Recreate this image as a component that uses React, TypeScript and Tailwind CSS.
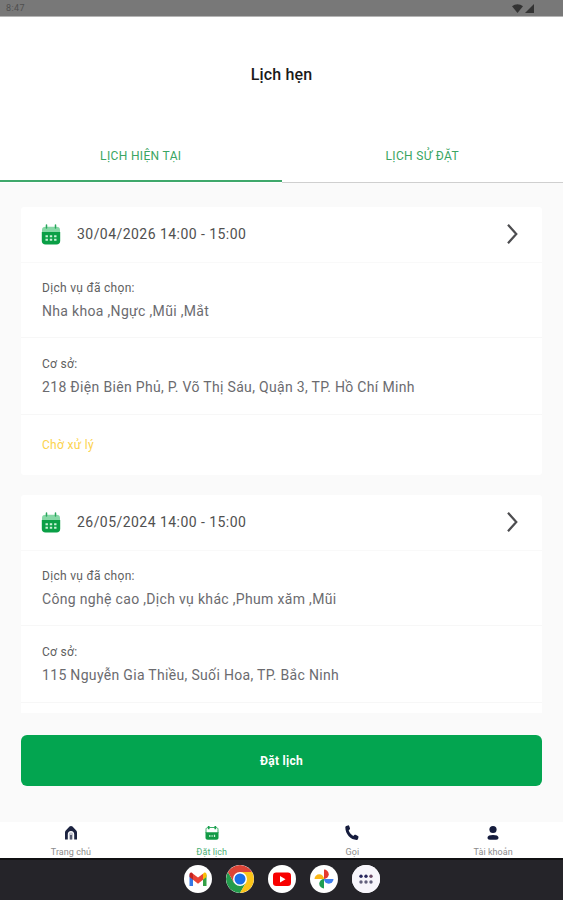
import { ReactNode } from "react";
import clsx from "clsx";

type Appointment = {
  time: string;
  services: string;
  address: string;
  status?: string;
};

const appointments: Appointment[] = [
  {
    time: "30/04/2026 14:00 - 15:00",
    services: "Nha khoa ,Ngực ,Mũi ,Mắt",
    address: "218 Điện Biên Phủ, P. Võ Thị Sáu, Quận 3, TP. Hồ Chí Minh",
    status: "Chờ xử lý",
  },
  {
    time: "26/05/2024 14:00 - 15:00",
    services: "Công nghệ cao ,Dịch vụ khác ,Phum xăm ,Mũi",
    address: "115 Nguyễn Gia Thiều, Suối Hoa, TP. Bắc Ninh",
  },
];

function CalendarIcon() {
  return (
    <svg className="h-[21px] w-5 shrink-0" viewBox="0 0 20 21">
      <path d="M1 9V6c0-2.200 1.300-3.200 3.500-3.200h11C17.700 2.800 19 3.800 19 6v3z" fill="#86d8a6" />
      <path d="M5.500 1v3M14.500 1v3" stroke="#2aa55c" strokeWidth="1.500" strokeLinecap="round" />
      <path d="M.8 8h18.400v9c0 2.300-1.400 3.500-3.700 3.500h-11C2.200 20.500.8 19.300.8 17z" fill="#0a9f46" />
      <path
        d="M4.500 12.200h2.400M8.800 12.200h2.400M13.100 12.200h2.400M4.500 15.800h2.400M8.800 15.800h2.400M13.100 15.800h2.400"
        stroke="#c9f2d8"
        strokeWidth="2"
      />
    </svg>
  );
}

function HomeIcon() {
  return (
    <svg className="size-4" viewBox="0 0 16 16">
      <path
        d="M8 1c.6 0 1.100.2 1.500.600L13 5.200c.7.700 1 1.500 1 2.400v6.900h-2.800V9.200C11.200 7.300 10 6 8 6S4.800 7.300 4.800 9.200v5.300H2V7.600c0-.9.300-1.700 1-2.400l3.500-3.600C6.900 1.200 7.400 1 8 1z"
        fill="#1c2340"
      />
      <path d="M8 7.200c1.300 0 2.100.8 2.100 2.100v5.200H5.900V9.300C5.900 8 6.700 7.200 8 7.200z" fill="#c4c6d0" />
      <path d="M7.100 10h1.800v4.500H7.100z" fill="#4a4f66" />
    </svg>
  );
}

function BookingIcon() {
  return (
    <svg className="size-4" viewBox="0 0 16 16">
      <path d="M2 8V4.500C2 3.200 2.800 2.500 4 2.500h8c1.200 0 2 .7 2 2V8" fill="none" stroke="#3cae68" />
      <path d="M4.700 1v3.200M11.300 1v3.200" stroke="#1ba04f" strokeWidth="1.700" />
      <path d="M1.500 7.300h13v5.200c0 1.500-.8 2.200-2.200 2.200H3.700c-1.400 0-2.200-.7-2.200-2.200z" fill="#129a45" />
      <path d="M5 11h1.500M7.500 11h1.200M10.500 9.700v2.300" stroke="#d8f3e1" strokeWidth="1.300" />
    </svg>
  );
}

function PhoneIcon() {
  return (
    <svg className="size-4" viewBox="0 0 16 16">
      <path
        d="M2.200 1 4 .4c.5-.2 1 .1 1.200.6l.8 2.300c.1.500 0 .9-.4 1.200l-.9.800c.7 2.300 2.200 4.200 4.600 5.600l1-.9c.4-.3.900-.4 1.300-.2l2.300 1.100c.5.200.7.700.6 1.200l-.5 1.800c-.2.600-.7 1-1.300 1C7 15 1.300 9.500 1.300 2.300c0-.6.4-1.100.9-1.300z"
        fill="#151c3d"
      />
    </svg>
  );
}

function UserIcon() {
  return (
    <svg className="size-4" viewBox="0 0 16 16">
      <circle cx="8" cy="4.500" r="3.600" fill="#151c3d" />
      <path d="M2.500 12.500c0-1.700 2.400-2.500 5.500-2.500s5.500.8 5.500 2.500c0 1.500-.8 2.200-2.300 2.200H4.800c-1.500 0-2.300-.7-2.300-2.200z" fill="#151c3d" />
    </svg>
  );
}

function StatusBar() {
  return (
    <div className="flex h-[17px] shrink-0 items-center justify-between border-b border-[#b5b5b5] bg-[#787878] pr-[29px] pl-[6px] text-[9px] tracking-[0.4px] text-[#4f4f4f]">
      <span className="pt-0.5">8:47</span>
      <div className="flex items-center gap-0.5 pt-px">
        <svg className="h-[9px] w-[11px]" viewBox="0 0 11 9">
          <path d="M0 2.200C3.200-.5 7.800-.5 11 2.200L5.500 9z" fill="#333" />
        </svg>
        <svg className="size-[9px]" viewBox="0 0 9 9">
          <path d="M9 0v9H0z" fill="#333" />
        </svg>
      </div>
    </div>
  );
}

function Field({ label, value, className }: { label: string; value: string; className: string }) {
  return (
    <div className={clsx("border-b border-[#f7f7f7] pr-5 pl-[21px] whitespace-nowrap", className)}>
      <p className="text-xs leading-6 tracking-[0.3px] text-[#606060]">{label}</p>
      <p className="-mt-px text-sm leading-6 tracking-[0.32px] text-[#6b6b6f]">{value}</p>
    </div>
  );
}

function AppointmentCard({ item }: { item: Appointment }) {
  return (
    <article className="rounded-[3px] bg-white">
      <div className="flex h-14 items-center border-b border-[#f9f9f9] pr-6 pb-px pl-5">
        <CalendarIcon />
        <span className="ml-4 text-sm tracking-[0.45px] whitespace-nowrap text-[#505050]">
          {item.time}
        </span>
        <svg className="ml-auto h-5 w-3" viewBox="0 0 12 20" fill="none">
          <path d="m2 .8 8.300 9.200L2 19.200" stroke="#4d4d50" strokeWidth="2.200" />
        </svg>
      </div>
      <Field label="Dịch vụ đã chọn:" value={item.services} className="h-[75px] pt-[13px]" />
      <Field label="Cơ sở:" value={item.address} className="h-[77px] pt-[14px]" />
      <p className="h-[60px] pr-5 pl-[21px] text-xs leading-[60px] tracking-[0.3px] text-[#fcd34d]">
        {item.status}
      </p>
    </article>
  );
}

function NavItem({ label, active, children }: { label: string; active?: boolean; children: ReactNode }) {
  return (
    <div className="flex flex-1 flex-col items-center pt-[3px] pl-px">
      {children}
      <span
        className={clsx(
          "mt-1.5 text-[9px] leading-[11px] tracking-[0.05px]",
          active ? "text-[#4caf76]" : "text-[#8c8c8c]",
        )}
      >
        {label}
      </span>
    </div>
  );
}

function DockIcon({ children }: { children: ReactNode }) {
  return (
    <div className="size-7 overflow-hidden rounded-full bg-white">
      <svg className="size-7" viewBox="0 0 28 28">
        {children}
      </svg>
    </div>
  );
}

function Dock() {
  return (
    <div className="flex h-[42px] shrink-0 items-center justify-center gap-[14px] border-t-2 border-[#101012] bg-[#252429] pb-0.5">
      {/* Gmail */}
      <DockIcon>
        <path d="M5.500 9.500v11.500H9V12z" fill="#3578e5" />
        <path d="M22.500 9.500v11.500H19V12z" fill="#34a047" />
        <path d="M19 8.700 20 7.800c1.300-.8 2.500.100 2.500 1.600V12L19 14.800z" fill="#fbbc04" />
        <path d="M5.500 9.400c0-1.500 1.300-2.400 2.500-1.600l1 .9v6.100L5.500 12z" fill="#c5221f" />
        <path d="M9 8.700 14 12.600l5-3.900v6.100l-5 4-5-4z" fill="#ea4335" />
      </DockIcon>
      {/* Chrome */}
      <DockIcon>
        <path d="M1.880 7A14 14 0 0 0 14 28l6.060-10.500L14 14 7.940 17.500z" fill="#249c4c" />
        <path d="M26.120 7A14 14 0 0 1 14 28l6.060-10.500L14 14V7z" fill="#fcc419" />
        <path d="M1.880 7A14 14 0 0 1 26.120 7H14v7l-6.060 3.500z" fill="#db4437" />
        <circle cx="14" cy="14" r="7" fill="#fff" />
        <circle cx="14" cy="14" r="5.500" fill="#1a6fe8" />
      </DockIcon>
      {/* YouTube */}
      <DockIcon>
        <rect x="5" y="7.500" width="18" height="13.500" rx="3.200" fill="#f80000" />
        <path d="m12 11 5.500 3.200L12 17.400z" fill="#fff" />
      </DockIcon>
      {/* Photos */}
      <DockIcon>
        <path d="M14 4.500a4.750 4.750 0 0 1 0 9.500z" fill="#e6392e" />
        <path d="M23.500 14a4.750 4.750 0 0 1-9.500 0z" fill="#3f7fee" />
        <path d="M14 23.500a4.750 4.750 0 0 1 0-9.500z" fill="#1f9d51" />
        <path d="M4.500 14a4.750 4.750 0 0 1 9.500 0z" fill="#fbb716" />
      </DockIcon>
      {/* App drawer */}
      <DockIcon>
        <rect width="28" height="28" fill="#f7f5fb" />
        <g fill="#29285f">
          <circle cx="9" cy="11.300" r="1.700" />
          <circle cx="14" cy="11.300" r="1.700" />
          <circle cx="19" cy="11.300" r="1.700" fill="#6c4a66" />
        </g>
        <g fill="#62607c">
          <circle cx="9" cy="17" r="1.700" />
          <circle cx="14" cy="17" r="1.700" />
          <circle cx="19" cy="17" r="1.700" />
        </g>
      </DockIcon>
    </div>
  );
}

export default function App() {
  return (
    <div className="flex h-[900px] w-[563px] flex-col overflow-hidden bg-[#fafafa] font-['Roboto',sans-serif]">
      <StatusBar />

      <header className="shrink-0 bg-white">
        <h1 className="h-[113px] pt-[46px] text-center text-base leading-6 font-medium tracking-[0.15px] text-[#1a1a1a]">
          Lịch hẹn
        </h1>
        <div className="grid h-[53px] grid-cols-2 text-center text-xs leading-[50px] tracking-[0.35px] text-[#3aa562]">
          <div className="h-[52px] border-b-2 border-[#3fa86b] pt-px">LỊCH HIỆN TẠI</div>
          <div className="h-[53px] border-b border-[#cfcfcf] pt-px">LỊCH SỬ ĐẶT</div>
        </div>
      </header>

      <main className="mt-6 h-[506px] shrink-0 space-y-5 overflow-hidden px-[21px]">
        {appointments.map((item) => (
          <AppointmentCard key={item.time} item={item} />
        ))}
      </main>

      <div className="flex-1 px-[21px] pt-[22px]">
        <button className="h-[51px] w-full rounded-md bg-[#03a550] text-xs font-bold tracking-[0.25px] text-white">
          Đặt lịch
        </button>
      </div>

      <nav className="flex h-9 shrink-0 bg-white">
        <NavItem label="Trang chủ">
          <HomeIcon />
        </NavItem>
        <NavItem label="Đặt lịch" active>
          <BookingIcon />
        </NavItem>
        <NavItem label="Gọi">
          <PhoneIcon />
        </NavItem>
        <NavItem label="Tài khoản">
          <UserIcon />
        </NavItem>
      </nav>

      <Dock />
    </div>
  );
}
